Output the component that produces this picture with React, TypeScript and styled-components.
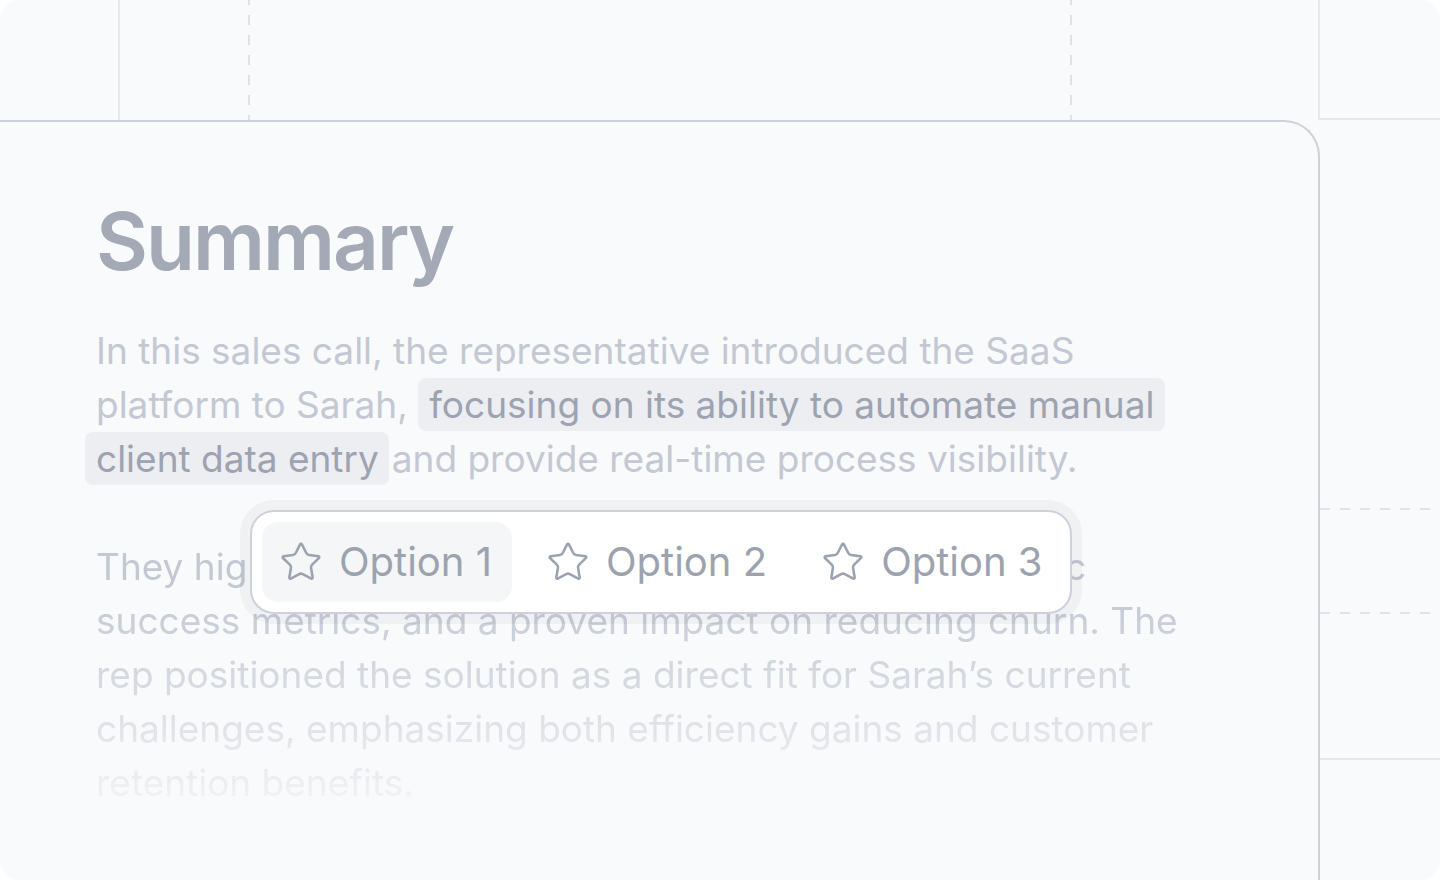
import React from "react";
import styled, { createGlobalStyle } from "styled-components";
import { Star } from "lucide-react";

const Global = createGlobalStyle`
  * { box-sizing: border-box; }
  html, body { margin: 0; padding: 0; background: #ffffff; }
  body { font-family: "Inter", "Noto Sans", sans-serif; -webkit-font-smoothing: antialiased; }
`;

const LIGHT = "#e6e8ee";
const DASH = "#dfe2e9";
const CARD_LINE = "#cdd1dc";

const Frame = styled.div`
  width: 1440px;
  height: 880px;
  border-radius: 20px;
  overflow: hidden;
  background: #f9fafb;
  display: grid;
  grid-template-columns: 1320px 1fr;
  grid-template-rows: 120px 1fr;
`;

const TopStrip = styled.div`
  display: flex;
  height: 120px;
`;

const Segment = styled.div<{ $w?: number; $edge?: "solid" | "dashed" | "none" }>`
  flex: ${(p) => (p.$w ? `0 0 ${p.$w}px` : "1 1 auto")};
  height: 100%;
  border-right: ${(p) => (p.$edge === "solid" ? `2px solid ${LIGHT}` : "none")};
  background: ${(p) =>
    p.$edge === "dashed"
      ? `repeating-linear-gradient(to bottom, ${DASH} 0 5px, transparent 5px 15px, ${DASH} 15px 20px) right top / 2px 100% no-repeat`
      : "none"};
`;

const TopCorner = styled.div`
  border-bottom: 2px solid ${LIGHT};
`;

const Rail = styled.div`
  display: flex;
  flex-direction: column;
`;

const RailBand = styled.div<{ $h?: number; $edge?: "solid" | "dashed" | "none" }>`
  flex: ${(p) => (p.$h ? `0 0 ${p.$h}px` : "1 1 auto")};
  border-bottom: ${(p) => (p.$edge === "solid" ? `2px solid ${LIGHT}` : "none")};
  background: ${(p) =>
    p.$edge === "dashed"
      ? `repeating-linear-gradient(to right, ${DASH} 0 10px, transparent 10px 20px) left bottom / 100% 2px no-repeat`
      : "none"};
`;

const Card = styled.section`
  position: relative;
  border-top: 2px solid ${CARD_LINE};
  border-right: 2px solid ${CARD_LINE};
  border-top-right-radius: 36px;
  background: #f9fafb;
  padding: 71px 0 0 96px;
  display: flex;
  flex-direction: column;
`;

const Title = styled.h1`
  margin: 0 0 35px;
  font-family: "Inter", sans-serif;
  font-weight: 600;
  font-size: 80px;
  line-height: 96px;
  letter-spacing: -0.025em;
  color: #a3a9b5;
`;

const Body = styled.div`
  width: 1100px;
  display: flex;
  flex-direction: column;
  gap: 54px;
`;

const Para = styled.p<{ $fade?: boolean }>`
  margin: 0;
  font-size: 37px;
  line-height: 54px;
  color: #c3c8d3;
  ${(p) =>
    p.$fade
      ? `-webkit-mask-image: linear-gradient(to bottom, #000 55px, rgba(0,0,0,0.12) 100%);
         mask-image: linear-gradient(to bottom, #000 55px, rgba(0,0,0,0.12) 100%);`
      : ""}
`;

const Mark = styled.span<{ $continued?: boolean }>`
  background: #eceef2;
  color: #9da3b0;
  border-radius: 8px;
  padding: 4px 11px;
  margin-left: ${(p) => (p.$continued ? "-11px" : "0")};
  margin-right: ${(p) => (p.$continued ? "3px" : "0")};
  padding-right: ${(p) => (p.$continued ? "10px" : "11px")};
`;

const Popup = styled.div`
  position: absolute;
  left: 250px;
  top: 388px;
  width: 822px;
  height: 104px;
  padding: 10px;
  display: flex;
  align-items: stretch;
  gap: 17px;
  background: #ffffff;
  border: 2px solid ${CARD_LINE};
  border-radius: 24px;
  box-shadow: 0 0 0 10px rgba(17, 24, 39, 0.04);
`;

const Option = styled.button<{ $active?: boolean }>`
  flex: 0 0 auto;
  display: flex;
  align-items: center;
  gap: 16px;
  padding: 0 20px 0 17px;
  height: 80px;
  border: none;
  border-radius: 16px;
  background: ${(p) => (p.$active ? "#f5f6f8" : "transparent")};
  font-family: "Inter", sans-serif;
  font-size: 40px;
  font-weight: 400;
  line-height: 1;
  white-space: nowrap;
  color: #9ca3af;
  cursor: pointer;
  svg { flex: 0 0 auto; }
`;

export default function App() {
  return (
    <>
      <Global />
      <Frame>
        <TopStrip>
          <Segment $w={120} $edge="solid" />
          <Segment $w={130} $edge="dashed" />
          <Segment $w={822} $edge="dashed" />
          <Segment $edge="solid" />
        </TopStrip>
        <TopCorner />
        <Card>
          <Title>Summary</Title>
          <Body>
            <Para>
              In this sales call, the representative introduced the SaaS platform to Sarah,{" "}
              <Mark>focusing on its ability to automate manual</Mark>
              <br />
              <Mark $continued>client data entry</Mark>and provide real-time process visibility.
            </Para>
            <Para $fade>
              They highlighted seamless CRM integration, and realistic
              <br />
              success metrics, and a proven impact on reducing churn. The rep positioned the
              solution as a direct fit for Sarah’s current challenges, emphasizing both efficiency
              gains and customer retention benefits.
            </Para>
          </Body>
          <Popup>
            {["Option 1", "Option 2", "Option 3"].map((label, i) => (
              <Option key={label} $active={i === 0}>
                <Star size={44} strokeWidth={1.4} />
                {label}
              </Option>
            ))}
          </Popup>
        </Card>
        <Rail>
          <RailBand $h={390} $edge="dashed" />
          <RailBand $h={104} $edge="dashed" />
          <RailBand $h={146} $edge="solid" />
          <RailBand />
        </Rail>
      </Frame>
    </>
  );
}
